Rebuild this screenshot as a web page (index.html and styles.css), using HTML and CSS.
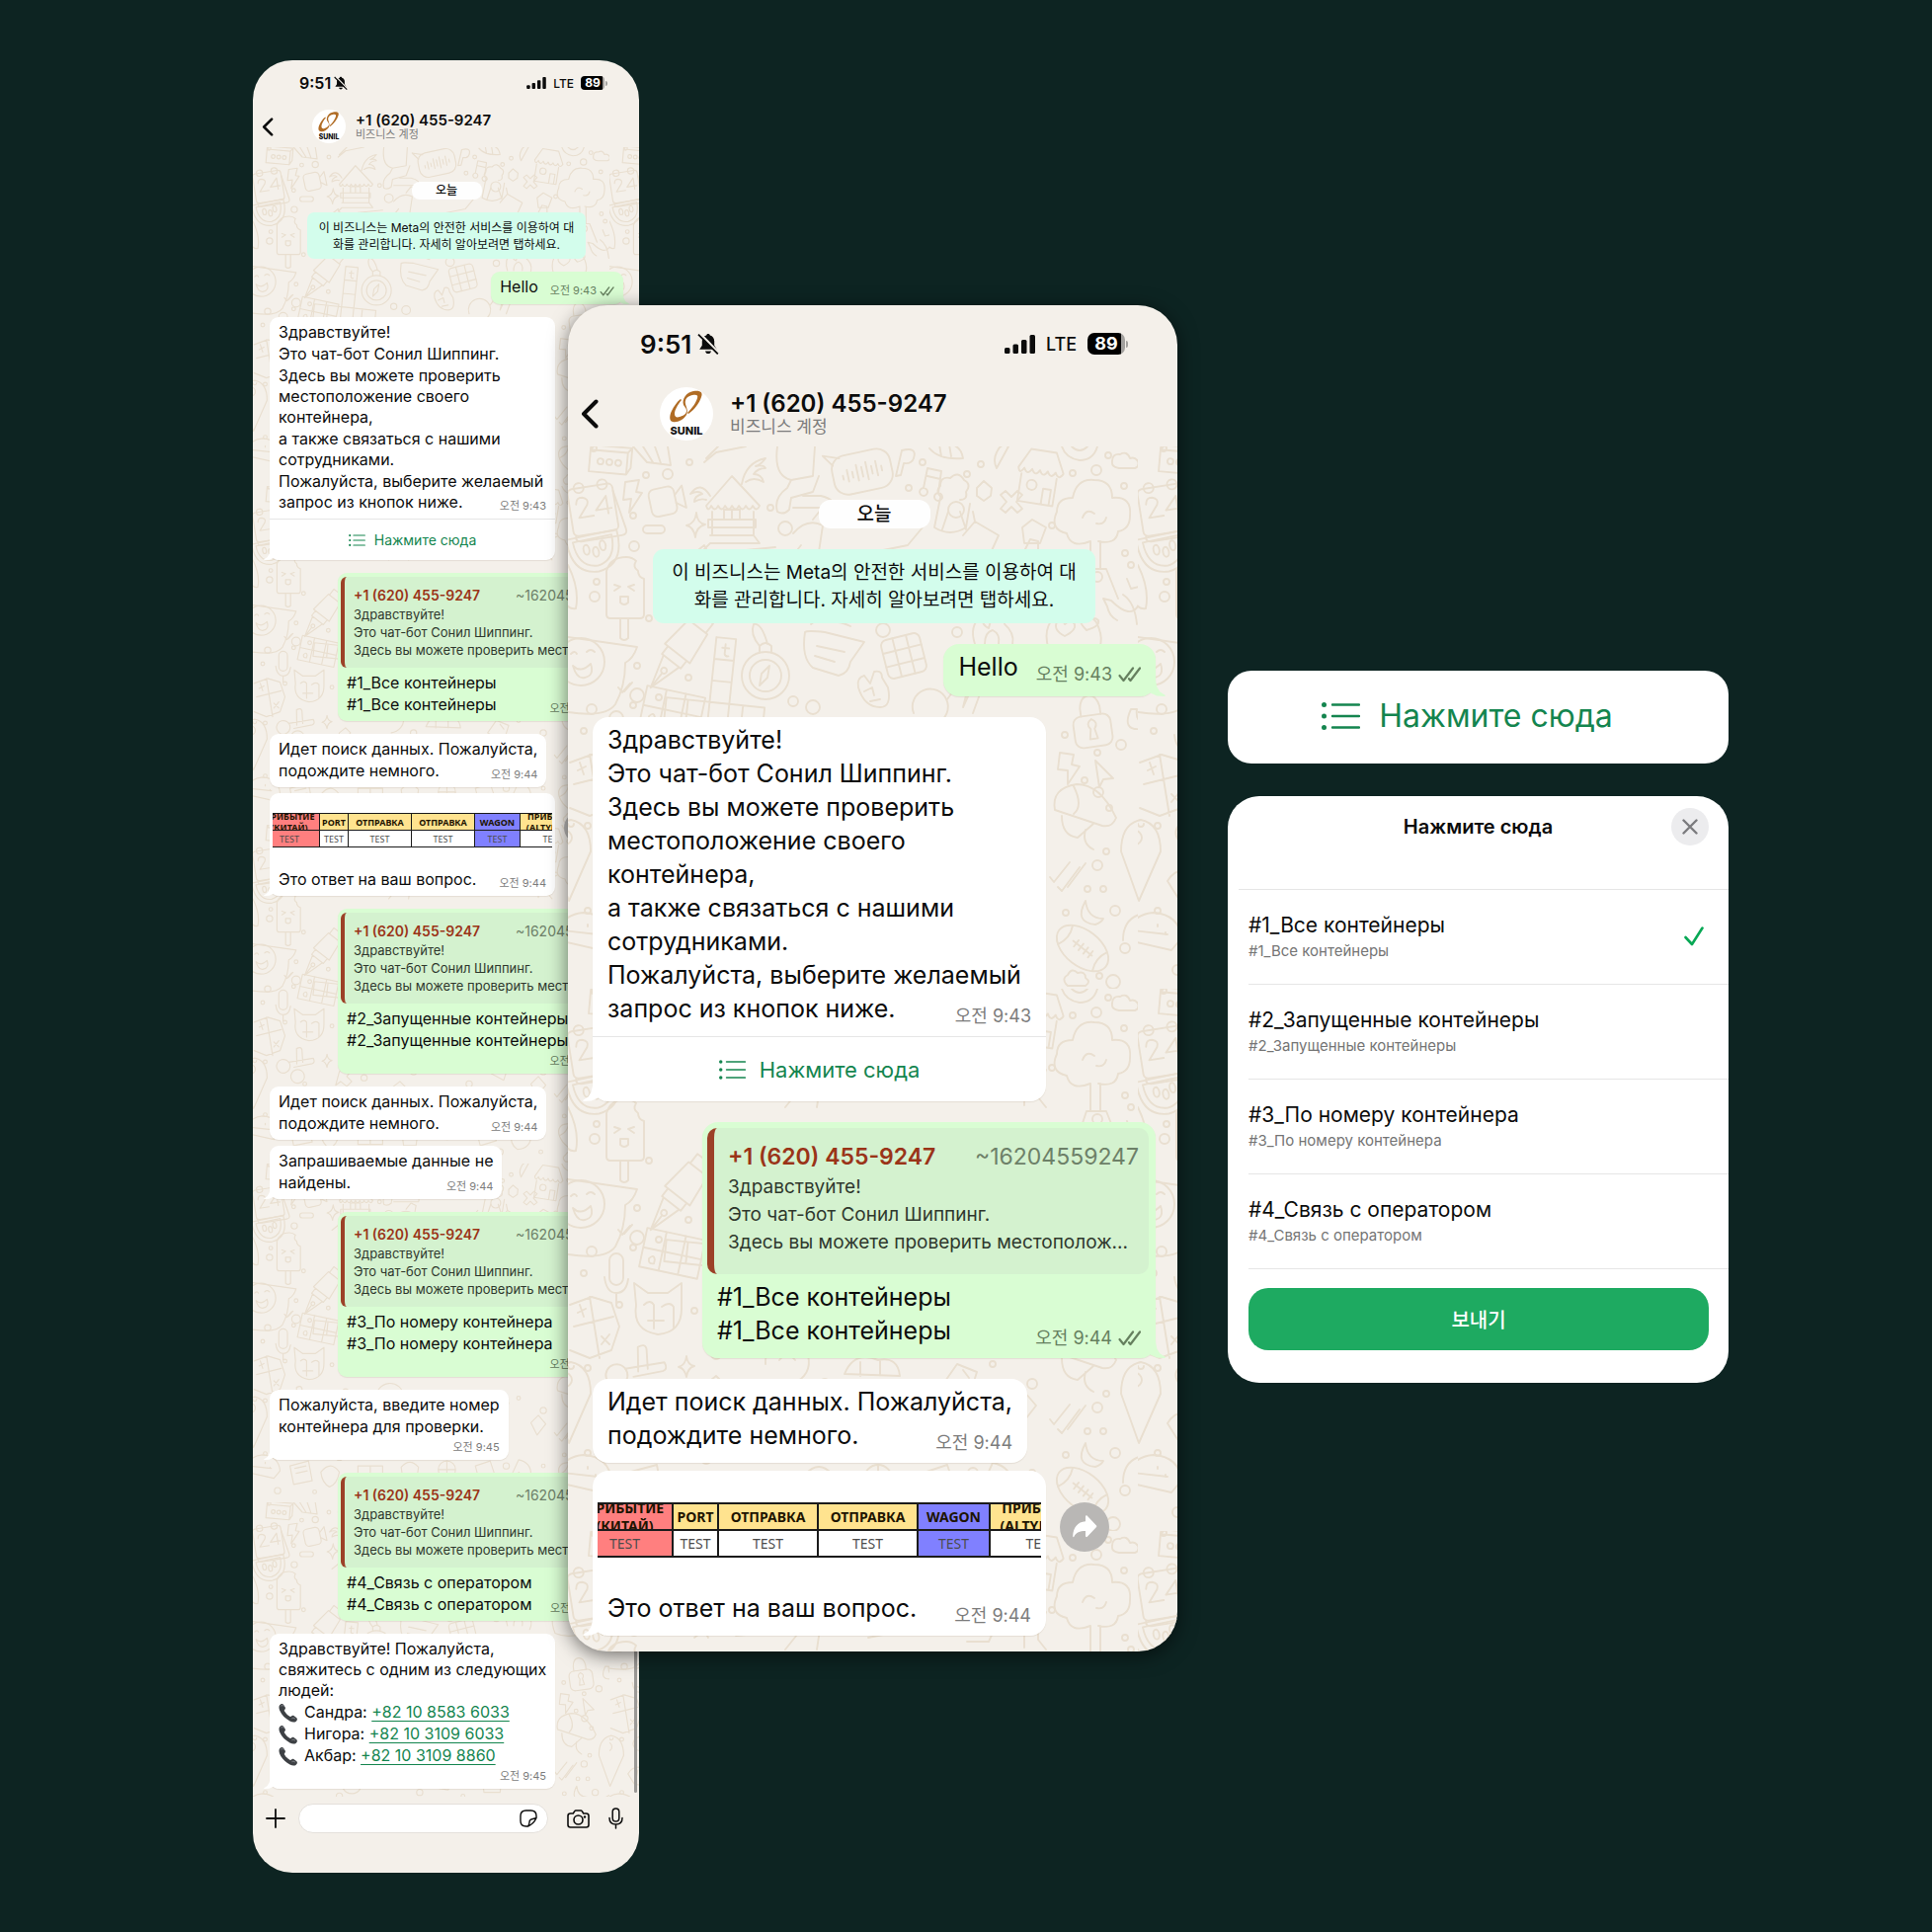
FILE: index.html
```html
<!DOCTYPE html>
<html lang="ru">
<head>
<meta charset="utf-8">
<meta name="viewport" content="width=device-width, initial-scale=1">
<title>Sunil Shipping chat-bot</title>
<link rel="stylesheet" href="styles.css">
</head>
<body>
<svg class="sprite" aria-hidden="true">
  <symbol id="i-bell" viewBox="0 0 22 22">
    <path d="M11 1c1 0 1.800.7 1.800 1.600 2.900.8 4.400 3.100 4.400 6v4.200l2.600 4H2.200l2.600-4V8.600c0-2.900 1.500-5.200 4.400-6C9.200 1.700 10 1 11 1z" fill="currentColor"/>
    <path d="M8 18.500h6c-.4 1.700-1.500 2.600-3 2.600s-2.600-.9-3-2.600z" fill="currentColor"/>
    <path d="M2.800.6 22 20.400" stroke="#f4f0ea" stroke-width="2.200" fill="none"/>
    <path d="M1 1.600 20.800 21.400" stroke="currentColor" stroke-width="1.800" fill="none"/>
  </symbol>
  <symbol id="i-signal" viewBox="0 0 31 19">
    <g fill="currentColor"><rect x="0" y="13" width="5.500" height="6" rx="1.500"/><rect x="8.500" y="9.500" width="5.500" height="9.500" rx="1.500"/><rect x="17" y="5" width="5.500" height="14" rx="1.500"/><rect x="25.500" y="0" width="5.500" height="19" rx="1.500"/></g>
  </symbol>
  <symbol id="i-back" viewBox="0 0 18 30">
    <path d="M15.500 2.500 3 15l12.500 12.500" fill="none" stroke="currentColor" stroke-width="4" stroke-linecap="round" stroke-linejoin="round"/>
  </symbol>
  <symbol id="i-logo" viewBox="0 0 54 54">
    <circle cx="27" cy="27" r="27" fill="#fff"/>
    <g fill="#b06c25">
      <path d="M24 18C22 12 27 5 34 4c7-1 10 1 8 6-2 6-7 13-13 17l-1-1c5-5 9-11 10-15 1-3-1-4-5-3-5 1-8 4-7 9 1 4 3 7 1 11-3 5-9 8-14 7-4-1-3-7-1-11 2-4 5-9 9-12l1 1c-4 5-7 10-7 14 0 3 2 4 5 3 4-1 7-3 7-6 0-3-2-4-3-6z"/>
    </g>
    <text x="27" y="48" text-anchor="middle" class="logo-text">SUNIL</text>
  </symbol>
  <symbol id="i-ticks" viewBox="0 0 23 16">
    <path d="M1.500 9 5.500 14 15 1.500M11 12.200 12.500 14 22 1.500" fill="none" stroke="currentColor" stroke-width="2.200" stroke-linecap="round" stroke-linejoin="round"/>
  </symbol>
  <symbol id="i-list" viewBox="0 0 39 28">
    <g fill="currentColor"><circle cx="2.500" cy="2.500" r="2.500"/><circle cx="2.500" cy="14" r="2.500"/><circle cx="2.500" cy="25.500" r="2.500"/></g>
    <path d="M11 2.500h27M11 14h27M11 25.500h27" stroke="currentColor" stroke-width="2.400" stroke-linecap="round"/>
  </symbol>
  <symbol id="i-forward" viewBox="0 0 50 50">
    <circle cx="25" cy="25" r="25" fill="#b9b7b5"/>
    <path d="M26 14.500c0-1 1-1.500 1.800-.8l9 9.500c.7.700.7 1.400 0 2.100l-9 9.500c-.8.700-1.800.2-1.800-.8v-5c-6 0-9.500 1.500-11.500 5.500-.5 1-1.300.8-1.300-.3C13.500 25.500 18 19.800 26 19.300z" fill="#fff"/>
  </symbol>
  <symbol id="i-handset" viewBox="0 0 20 20">
    <path d="M1 2.500C2 .8 4 .4 5 1.700l1.600 2.500c.6 1 .4 2-.4 2.700-.5.500-.5.900-.1 1.600 1.300 2.300 3 4 5.300 5.200.7.400 1.100.3 1.600-.2.800-.8 1.800-1 2.700-.3l2.400 1.700c1.300 1 1 2.900-.6 4-1.500 1-3.600.8-6-.4C6.900 16 3.200 12.400 1.200 7.800.4 5.700.2 3.900 1 2.500z" fill="#3d4044"/>
    <path d="M2.600 3c1-.9 1.800-.6 2.300.2M13.800 15.500c.9-.6 1.900-.3 2.700.3" fill="none" stroke="#85898e" stroke-width="1" stroke-linecap="round"/>
  </symbol>
  <symbol id="i-plus" viewBox="0 0 20 20">
    <path d="M10 1v18M1 10h18" stroke="currentColor" stroke-width="1.800" stroke-linecap="round"/>
  </symbol>
  <symbol id="i-sticker" viewBox="0 0 18 18">
    <path d="M17 8.500V6.500C17 3 15 1 11.500 1h-5C3 1 1 3 1 6.500v5C1 15 3 17 6.500 17H8.500C12 15.500 15.500 12 17 8.500zM17 8.500C14 10 11.500 9 10.500 11 9.500 12.500 10.500 15 8.500 17" fill="none" stroke="currentColor" stroke-width="1.400" stroke-linejoin="round"/>
  </symbol>
  <symbol id="i-camera" viewBox="0 0 23 19">
    <path d="M3.500 4h2.800l1.500-2.300c.3-.5.700-.7 1.200-.7h5c.5 0 .9.200 1.200.7L16.700 4h2.800c1.500 0 2.500 1 2.500 2.500v9c0 1.500-1 2.500-2.500 2.500h-16C2 18 1 17 1 15.500v-9C1 5 2 4 3.500 4z" fill="none" stroke="currentColor" stroke-width="1.600"/>
    <circle cx="11.500" cy="10.500" r="4.500" fill="none" stroke="currentColor" stroke-width="1.600"/>
    <circle cx="18" cy="7.500" r="1.200" fill="currentColor"/>
  </symbol>
  <symbol id="i-mic" viewBox="0 0 15 22">
    <rect x="4.200" y="1" width="6.600" height="13" rx="3.300" fill="none" stroke="currentColor" stroke-width="1.500"/>
    <path d="M1 10.500C1 14.500 3.500 17 7.500 17s6.500-2.500 6.500-6.500M7.500 17v4" fill="none" stroke="currentColor" stroke-width="1.500" stroke-linecap="round"/>
  </symbol>
  <symbol id="i-close" viewBox="0 0 16 16">
    <path d="M1.500 1.500 14.500 14.500M14.500 1.500 1.500 14.500" stroke="currentColor" stroke-width="2.400" stroke-linecap="round"/>
  </symbol>
</svg>

<main class="stage">

  <section class="phone phone-small" aria-label="Full conversation">
    <div class="status">
      <span class="clock">9:51</span>
      <svg class="bell"><use href="#i-bell"/></svg>
      <svg class="signal"><use href="#i-signal"/></svg>
      <span class="network">LTE</span>
      <span class="battery"><b>89</b></span>
    </div>
    <header class="contact-bar">
      <button class="icon-button" type="button" aria-label="Back"><svg class="back"><use href="#i-back"/></svg></button>
      <svg class="avatar"><use href="#i-logo"/></svg>
      <div>
        <h2>+1 (620) 455-9247</h2>
        <p lang="ko">비즈니스 계정</p>
      </div>
    </header>

    <div class="chat">
      <p class="day" lang="ko">오늘</p>
      <p class="notice" lang="ko">이 비즈니스는 Meta의 안전한 서비스를 이용하여 대<br>화를 관리합니다. 자세히 알아보려면 탭하세요.</p>

      <div class="bubble out tail">
        <p class="last">Hello <time>오전 9:43<svg class="ticks"><use href="#i-ticks"/></svg></time></p>
      </div>

      <div class="bubble in tail wide">
        <p>Здравствуйте!</p>
        <p>Это чат-бот Сонил Шиппинг.</p>
        <p>Здесь вы можете проверить<br>местоположение своего<br>контейнера,</p>
        <p>а также связаться с нашими<br>сотрудниками.</p>
        <p>Пожалуйста, выберите желаемый</p>
        <p class="last joined">запрос из кнопок ниже. <time>오전 9:43</time></p>
        <button class="menu-button" type="button"><svg class="list"><use href="#i-list"/></svg>Нажмите сюда</button>
      </div>

      <div class="bubble out tail wide">
        <blockquote>
          <div class="from"><b>+1 (620) 455-9247</b><span>~16204559247</span></div>
          <p>Здравствуйте!<br>Это чат-бот Сонил Шиппинг.<br>Здесь вы можете проверить местополож...</p>
        </blockquote>
        <p>#1_Все контейнеры</p>
        <p class="last">#1_Все контейнеры <time>오전 9:44<svg class="ticks"><use href="#i-ticks"/></svg></time></p>
      </div>

      <div class="bubble in">
        <p>Идет поиск данных. Пожалуйста,</p>
        <p class="last">подождите немного. <time>오전 9:44</time></p>
      </div>

      <div class="media-row">
        <div class="bubble in tail wide">
          <div class="crop">
            <table>
              <tr><th class="red"><div>ПРИБЫТИЕ<br>(КИТАЙ)</div></th><th><div>PORT</div></th><th><div>ОТПРАВКА</div></th><th><div>ОТПРАВКА</div></th><th class="blue"><div>WAGON</div></th><th><div>ПРИБЫТИЕ<br>(ALTYNKOL)</div></th></tr>
              <tr><td class="red">TEST</td><td>TEST</td><td>TEST</td><td>TEST</td><td class="blue">TEST</td><td>TEST</td></tr>
            </table>
          </div>
          <p class="last">Это ответ на ваш вопрос. <time>오전 9:44</time></p>
        </div>
        <button class="icon-button" type="button" aria-label="Forward"><svg class="forward"><use href="#i-forward"/></svg></button>
      </div>

      <div class="bubble out tail wide">
        <blockquote>
          <div class="from"><b>+1 (620) 455-9247</b><span>~16204559247</span></div>
          <p>Здравствуйте!<br>Это чат-бот Сонил Шиппинг.<br>Здесь вы можете проверить местополож...</p>
        </blockquote>
        <p>#2_Запущенные контейнеры</p>
        <p>#2_Запущенные контейнеры</p>
        <p class="stamp"><time>오전 9:44<svg class="ticks"><use href="#i-ticks"/></svg></time></p>
      </div>

      <div class="bubble in">
        <p>Идет поиск данных. Пожалуйста,</p>
        <p class="last">подождите немного. <time>오전 9:44</time></p>
      </div>
      <div class="bubble in tail follow">
        <p>Запрашиваемые данные не</p>
        <p class="last">найдены. <time>오전 9:44</time></p>
      </div>

      <div class="bubble out tail wide">
        <blockquote>
          <div class="from"><b>+1 (620) 455-9247</b><span>~16204559247</span></div>
          <p>Здравствуйте!<br>Это чат-бот Сонил Шиппинг.<br>Здесь вы можете проверить местополож...</p>
        </blockquote>
        <p>#3_По номеру контейнера</p>
        <p>#3_По номеру контейнера</p>
        <p class="stamp"><time>오전 9:44<svg class="ticks"><use href="#i-ticks"/></svg></time></p>
      </div>

      <div class="bubble in tail">
        <p>Пожалуйста, введите номер</p>
        <p>контейнера для проверки.</p>
        <p class="stamp"><time>오전 9:45</time></p>
      </div>

      <div class="bubble out tail wide">
        <blockquote>
          <div class="from"><b>+1 (620) 455-9247</b><span>~16204559247</span></div>
          <p>Здравствуйте!<br>Это чат-бот Сонил Шиппинг.<br>Здесь вы можете проверить местополож...</p>
        </blockquote>
        <p>#4_Связь с оператором</p>
        <p class="last">#4_Связь с оператором <time>오전 9:45<svg class="ticks"><use href="#i-ticks"/></svg></time></p>
      </div>

      <div class="bubble in tail wide">
        <p>Здравствуйте! Пожалуйста,<br>свяжитесь с одним из следующих<br>людей:</p>
        <p class="person"><svg><use href="#i-handset"/></svg><span>Сандра: <a href="tel:+821085836033">+82 10 8583 6033</a></span></p>
        <p class="person"><svg><use href="#i-handset"/></svg><span>Нигора: <a href="tel:+821031096033">+82 10 3109 6033</a></span></p>
        <p class="person"><svg><use href="#i-handset"/></svg><span>Акбар: <a href="tel:+821031098860">+82 10 3109 8860</a></span></p>
        <p class="stamp"><time>오전 9:45</time></p>
      </div>
      <span class="scroll-thumb"></span>
    </div>

    <form class="composer">
      <button class="icon-button" type="button" aria-label="Attach"><svg class="plus"><use href="#i-plus"/></svg></button>
      <div class="field">
        <input type="text" aria-label="Message">
        <button class="icon-button" type="button" aria-label="Stickers"><svg class="sticker"><use href="#i-sticker"/></svg></button>
      </div>
      <button class="icon-button" type="button" aria-label="Camera"><svg class="camera"><use href="#i-camera"/></svg></button>
      <button class="icon-button" type="button" aria-label="Voice message"><svg class="mic"><use href="#i-mic"/></svg></button>
    </form>
  </section>

  <section class="phone phone-large" aria-label="Conversation close-up">
    <div class="status">
      <span class="clock">9:51</span>
      <svg class="bell"><use href="#i-bell"/></svg>
      <svg class="signal"><use href="#i-signal"/></svg>
      <span class="network">LTE</span>
      <span class="battery"><b>89</b></span>
    </div>
    <header class="contact-bar">
      <button class="icon-button" type="button" aria-label="Back"><svg class="back"><use href="#i-back"/></svg></button>
      <svg class="avatar"><use href="#i-logo"/></svg>
      <div>
        <h2>+1 (620) 455-9247</h2>
        <p lang="ko">비즈니스 계정</p>
      </div>
    </header>

    <div class="chat">
      <p class="day" lang="ko">오늘</p>
      <p class="notice" lang="ko">이 비즈니스는 Meta의 안전한 서비스를 이용하여 대<br>화를 관리합니다. 자세히 알아보려면 탭하세요.</p>

      <div class="bubble out tail">
        <p class="last">Hello <time>오전 9:43<svg class="ticks"><use href="#i-ticks"/></svg></time></p>
      </div>

      <div class="bubble in tail wide">
        <p>Здравствуйте!</p>
        <p>Это чат-бот Сонил Шиппинг.</p>
        <p>Здесь вы можете проверить<br>местоположение своего<br>контейнера,</p>
        <p>а также связаться с нашими<br>сотрудниками.</p>
        <p>Пожалуйста, выберите желаемый</p>
        <p class="last joined">запрос из кнопок ниже. <time>오전 9:43</time></p>
        <button class="menu-button" type="button"><svg class="list"><use href="#i-list"/></svg>Нажмите сюда</button>
      </div>

      <div class="bubble out tail wide">
        <blockquote>
          <div class="from"><b>+1 (620) 455-9247</b><span>~16204559247</span></div>
          <p>Здравствуйте!<br>Это чат-бот Сонил Шиппинг.<br>Здесь вы можете проверить местополож...</p>
        </blockquote>
        <p>#1_Все контейнеры</p>
        <p class="last">#1_Все контейнеры <time>오전 9:44<svg class="ticks"><use href="#i-ticks"/></svg></time></p>
      </div>

      <div class="bubble in">
        <p>Идет поиск данных. Пожалуйста,</p>
        <p class="last">подождите немного. <time>오전 9:44</time></p>
      </div>

      <div class="media-row">
        <div class="bubble in tail wide">
          <div class="crop">
            <table>
              <tr><th class="red"><div>ПРИБЫТИЕ<br>(КИТАЙ)</div></th><th><div>PORT</div></th><th><div>ОТПРАВКА</div></th><th><div>ОТПРАВКА</div></th><th class="blue"><div>WAGON</div></th><th><div>ПРИБЫТИЕ<br>(ALTYNKOL)</div></th></tr>
              <tr><td class="red">TEST</td><td>TEST</td><td>TEST</td><td>TEST</td><td class="blue">TEST</td><td>TEST</td></tr>
            </table>
          </div>
          <p class="last">Это ответ на ваш вопрос. <time>오전 9:44</time></p>
        </div>
        <button class="icon-button" type="button" aria-label="Forward"><svg class="forward"><use href="#i-forward"/></svg></button>
      </div>
    </div>
  </section>

  <aside class="details">
    <button class="callout" type="button"><svg class="list"><use href="#i-list"/></svg>Нажмите сюда</button>

    <form class="sheet">
      <header class="sheet-head">
        <h2 id="sheet-title">Нажмите сюда</h2>
        <button class="close" type="button" aria-label="Close"><svg><use href="#i-close"/></svg></button>
      </header>
      <div role="radiogroup" aria-labelledby="sheet-title">
        <label class="option"><span>#1_Все контейнеры<small>#1_Все контейнеры</small></span><input type="radio" name="menu" checked></label>
        <label class="option"><span>#2_Запущенные контейнеры<small>#2_Запущенные контейнеры</small></span><input type="radio" name="menu"></label>
        <label class="option"><span>#3_По номеру контейнера<small>#3_По номеру контейнера</small></span><input type="radio" name="menu"></label>
        <label class="option"><span>#4_Связь с оператором<small>#4_Связь с оператором</small></span><input type="radio" name="menu"></label>
      </div>
      <button class="send" type="button" lang="ko">보내기</button>
    </form>
  </aside>
</main>
</body>
</html>
```
FILE: styles.css
```css
:root {
  --paper: #f4f0ea;
  --ink: #0c0c0c;
  --muted: #7c7c7c;
  --green: #14854f;
  --mint: #d9fdd3;
  --wallpaper: url("data:image/svg+xml,<svg xmlns='http://www.w3.org/2000/svg' viewBox='0 0 577 549' preserveAspectRatio='none'><g fill='none' stroke='%23e9dfd0' stroke-width='1.900' stroke-linecap='round' stroke-linejoin='round'><g transform='translate(43 15) rotate(5)'><path d='M-21-10h38v22h-38zM-21-10l4-5h38v20l-4 7M21-15l-4 5'/><circle cx='-10' cy='1' r='3'/><circle cx='-1' cy='1' r='3'/><circle cx='8' cy='1' r='3'/></g><path d='M66 0l14 16 24 3-3-19M76 0l10 16M88 0l6 17M138 16l12-10 30-6M140 12l12-12'/><g transform='translate(26 62) rotate(-9)'><rect x='-24' y='-22' width='46' height='48' rx='5'/><path d='M-22 26q-2 6 6 6h40q6 0 5-6l-7-40'/><circle cx='-12' cy='-22' r='5'/><circle cx='12' cy='-22' r='5'/><path d='M-17-6q1-7 7-6 7 2 4 8l-10 12h15M14 8v-18L2 3h16'/></g><path d='M58 36l14-2-3 12 6 1-13 20 2-14-8 1z'/><g transform='translate(100 55) rotate(-12)'><rect x='-17' y='-14' width='26' height='28' rx='6'/><path d='M9-4l9-8v23l-9-7'/></g><g transform='translate(166 52)'><path d='M-26 8L0-22 28 8q-3 7-7 0-3 7-7 0-3 7-7 0-3 7-7 0-3 7-7 0-3 7-7 0-3 7-7 0-3 7-5 0zM-20 14v24M22 14v24M-24 22h48v8h-48zM-22 38h44l6 8h-50l-6 6M-8 12h16v10h-16zM0 12v10M10-14q4-22 24-26-4 6-10 8 8-2 10 2-8 0-12 6 8 0 10 8-10-6-18 0M-22-2q-10-16-20-2 8-4 12 0-8 2-8 8 6-4 12-2'/></g><path d='M212 0q-4 30 14 34l22-4 2-30M226 34l-4 8q-14 10-10 24 6 4 12-2l2-12 22-6 6-16M228 62h40q4-8-12-12h-18'/><g transform='translate(296 26) rotate(-12)'><rect x='-28' y='-20' width='60' height='40' rx='14'/><path d='M-26-12l-8-12 16 6M-18 0v4M-13-5v12M-8-2v6M-3-8v16M2-5v10M7-9v18M12-4v8M17-8v15M22-2v5'/></g><path d='M332 30l6-26q16-4 12 8-2 6-10 5l-3 12z'/><path d='M360 42a4 4 0 1 0 .1 0M360 42l4-20 14 3-3 22a4 4 0 1 1-.1 0M364 30l13 3'/><path d='M366 2q10 12 34 10-2-12-12-14M376-2l2 12M386-2l2 12M434 22l12-22q-8-4-12 6-4 8 0 16z'/><g transform='translate(477 30) rotate(9)'><path d='M-22-6L-12-26h26l10 20q-4 8-8 0-4 8-8 0-4 8-8 0-4 8-8 0-4 8-8 0-4 8-6 0zM-18 0v28h36v-28M6 28v-16h8v16'/><circle cx='-6' cy='10' r='5'/></g><path d='M500 0q4 12 18 14 14 0 18-14M510 0q8 8 16 0M558 22h16q5-2 3-7-3-5-8-3-3-8-10-4-8-1-8 7-1 6 7 7z'/><g transform='translate(391 62)'><path d='M-12-10q-8-6-2-12 0-10 10-8 8-8 14 2 8 4 2 12 2 8-6 8M-14-10l-6 30q16 10 32 0l4-24M-6 4l-6 18M6 4l6 18'/><circle cx='2' cy='2' r='8'/></g><path d='M414 42l7-7 8 7-1 8-7 5-7-5zM443 45l6 6 6-6 5 4-6 7 6 7-5 4-6-6-6 6-5-4 6-7-6-7z'/><g transform='translate(531 66)'><path d='M-2 30q-20 8-24-8-18-4-10-22 0-14 16-14 4-20 22-18 18 0 18 18 20-2 18 18 0 14-12 16-2 14-20 10M-10 6q4-10 12-4M4 12q8 2 10-6M-2 30v28M8 30v28M-16 88l10-30h20l12 30'/></g><g transform='translate(27 105) rotate(-12)'><path d='M-26-16h52q2 36-26 38-28-2-26-38zM-20-12h40q0 26-20 28-20-2-20-28z'/><ellipse cx='-8' cy='-2' rx='3' ry='5'/><ellipse cx='1' cy='2' rx='3' ry='5'/><ellipse cx='9' cy='-3' rx='3' ry='5'/></g><path d='M130 67q1 11 9 12-9 2-10 13-2-11-9-12 9-2 10-13z'/><rect x='76' y='80' width='22' height='8' rx='4'/><path d='M228 88q14-16 30-8l-6 40M236 100l-16 20M248 74l8-10 8 4-2 12M304 108l40-8 20-24M400 90l12-14 24 14-10 22-22 0M412 76l-2-10M460 82l10-8 14 8-6 16-16 0zM462 118v-12l6-12 8 2v14l8 10'/><path d='M128 108l10-8 4 8M170 106l40-4'/><g transform='translate(57 150)'><path d='M-18-24q4-14 20-14 6 0 10 4-4 6 2 10 0 6 6 8v36q0 4-4 4h-30q-4 0-4-4zM-4 24v20q4 4 8 0v-20M-10-10l6 2-6 4M10-10l-6 2 6 4M-4 2h8v6q-4 4-8 0z'/></g><path d='M0 120q12 24 8 44-10 2-14-14M556 176q-8-4-10-14l-4-8 8 2q20 20 28 4M562 150q12 8 14 30M566 134l4 10 8-2'/><g transform='translate(513 190)'><path d='M-24 22q-12-30 8-42 24-10 38 8 12 24-6 36-22 6-40-2z'/><path d='M-10 2q-12-6-8-14 6-4 8 2 6-6 10 0 2 6-10 12zM12-4q-10-10-4-14 6-2 6 4 6-4 10 0 2 6-12 10z'/></g><g transform='translate(112 208) rotate(38)'><path d='M-10-44h20v12h-20zM-12-32h24l4 34h-32zM-12 2h24v10h-24zM-10 12l10 34 10-34M0 46v-18'/><circle cx='0' cy='24' r='3'/></g><g transform='translate(17 218)'><path d='M-17-25l70 10q-4 12-12 16 0 24-10 42-10 14-48 8M34 26l4 5 8-9M40 30l8-9'/><circle cx='-4' cy='0' r='24'/><path d='M-14-8q4-4 6 0M2-10q4-4 8 0M-12 4q8 8 18-2 4 12-6 14-8 2-12-12z'/></g><g transform='translate(158 216) rotate(6)'><path d='M-10-22h20v88h-20zM-10 0h20M-10 22h20M-10 44h20M-54 44h100v22h-100zM-32 44v22M24 44v22M0-16v10q1 3 4 2M-3-12h7'/></g><g transform='translate(200 232)'><circle r='24'/><circle r='16'/><path d='M-4-2l8-8-2 12-8 8zM-6-24v-6q6-6 12 0v6M-6-30q-10-12-6-22 8-2 14 20'/></g><path d='M240 188q-4 26 8 36l26 8q10-2 12-14l14-20-40-10q-18-2-20 0zM252 202l28 6M250 212l20 6M246 180q10-8 14-2 14-2 26 4'/><g transform='translate(340 212) rotate(-14)'><rect x='-20' y='-20' width='40' height='40' rx='6'/><path d='M-7-20v40M7-20v40M-20-7h40M-20 7h40'/></g><path d='M412 200q-6-18 6-28 2 10 8 12 2-14 14-18-2 12 6 18 8 10 2 22M422 200q0-12 8-14 8 4 6 14'/><path d='M294 244q-2-10 6-12l6 8 4-12q8-2 8 6l6 10q4 20-8 20-16 0-22-20zM300 248l8-4 2 8M306 258l10-2M384 256l16-22 6 6-6 24 10-22 8 6-8 22'/><path d='M380 276l20 6M350 270a18 18 0 1 1 24 10'/><g transform='translate(531 284) rotate(-8)'><rect x='-19' y='-12' width='38' height='32' rx='8'/><path d='M-10-12v-8q2-12 10-12t10 12v8M-4 12l2-10q-5-6 2-10 7 4 2 10l2 10z'/></g><path d='M570 266q-10 22 10 20 4-2 6-6-12 0-10-14zM498 310l14 2-2 10 8 2-12 18 0-14-10-1zM534 318l18 18-10 1-4 8zM2 320l22-8 20 6 8 24-8 24-22 8-20-8M6 342l40-10M22 312l10 62M10 328l8-4M12 320l4 12M34 352l8 8M42 350l-8 10'/><path d='M493 368q-4-22 22-26 24 0 40 34-4 10-14 8l-48-16zM500 374q0 20 16 22l16-14M512 344q10 20 0 28M524 388q-4 14 8 20'/><path d='M560 410q0-28 20-32 20 4 20 32l-22 50zM-17 410q0-28 20-32 20 4 20 32l-22 50zM-10 396a7 7 0 1 0 14 0 7 7 0 1 0-14 0M-8 384a3 3 0 1 0 6 0M0 382a3 3 0 1 0 6 0'/><path d='M488 436l4 5 16-20M496 446l4 4 18-24M506 446l18-24M524 460q-12 22 10 24 6-2 8-6-16 0-18-18z'/><g transform='translate(521 508) rotate(38)'><ellipse rx='30' ry='18'/><path d='M-22-12q6 12 0 24M22-12q-6 12 0 24M-12 0h24M-8-4v8M-2-4v8M4-4v8M10-4v8'/></g><path d='M-10 500q0-26 26-28 26 2 28 26l-10 12zM-6 490l36 4M20 484v2M28 492v2M562 500q0-26 26-28M504 544q-4-6 2-9 4-8 10-2 8-2 8 5 6 4 0 8h-18z'/><g transform='translate(49 288)'><rect x='-7' y='-20' width='14' height='32' rx='7'/><path d='M-12 4q2 16 12 16t12-14M0 20v10'/></g><g transform='translate(106 266) rotate(12)'><path d='M-30-18h60v40h-60zM-10-18v40M10-18v40M-30 2h60'/><path d='M-22 12q4-6 6 0v4q-6 2-6-4'/></g><g transform='translate(91 330)'><path d='M-22-10l-2-22 14 10h20l14-10v26q0 24-24 26-26-4-22-30zM-14-10q6-6 10 0v24M4-8q8-6 12 0v22M-10 6h16'/></g><g transform='translate(62 392) rotate(-15)'><circle r='11' cx='-12' cy='-4'/><circle r='11' cx='6' cy='18'/><path d='M-2-8l40 4q2 8-4 8l-30-2M10-2l6-24q8-2 8 4l-4 20'/></g><path d='M120 372q1 9 8 10-7 2-8 11-2-9-8-10 7-2 8-11zM140 400l10-8 8 8-6 8 8 8-8 8-10-8-8 6zM200 380a22 22 0 1 1 24 20M214 376q8-10 16 0M280 390q10-24 34-14 20-4 22 16zM296 392v-14M316 392v-16M380 400l14-20 20 8-8 26zM400 386l6 8M30 440q10-16 26-8l20 12q-14 20-36 12zM46 434l-4 20M100 430l30 8-4 24-30-6zM106 444l18 4M160 440a16 16 0 1 0 .1 0M150 448q10 10 22 0M220 430l18-14 16 16-20 24zM228 436l10 10M290 440q20-14 36 4l-10 22-24-4zM370 440h34l-4 30h-26zM366 432h42v8h-42zM450 420l12-12 12 14-14 18zM60 490l30-8 6 32-30 6zM68 494l18-4M70 502l18-4M110 500q16-20 30 0-4 20-16 24-12-6-14-24zM170 490h40v28h-40zM190 490v28M170 504h40M240 492q14-16 28 0l-4 28h-20zM300 496a14 14 0 1 0 28 0 14 14 0 1 0-28 0M300 496h28M314 482v28M360 490l24-8 10 30-26 8zM430 480q20 4 20 24t-22 22q-14-10-8-24zM430 500l10 8'/><g><circle cx='26' cy='2' r='3'/><circle cx='123' cy='16' r='3'/><circle cx='79' cy='29' r='3'/><circle cx='101' cy='28' r='5'/><circle cx='205' cy='62' r='3'/><circle cx='220' cy='83' r='7'/><circle cx='345' cy='42' r='3'/><circle cx='359' cy='16' r='3'/><circle cx='404' cy='28' r='3'/><circle cx='418' cy='18' r='3'/><circle cx='511' cy='27' r='3'/><circle cx='535' cy='24' r='5'/><circle cx='547' cy='9' r='3'/><circle cx='563' cy='40' r='3'/><circle cx='66' cy='70' r='3'/><circle cx='67' cy='101' r='5'/><circle cx='29' cy='137' r='3'/><circle cx='82' cy='174' r='3'/><circle cx='27' cy='152' r='5'/><circle cx='490' cy='80' r='3'/><circle cx='570' cy='120' r='3'/><circle cx='536' cy='132' r='5'/><circle cx='564' cy='108' r='3'/><circle cx='319' cy='186' r='7'/><circle cx='394' cy='188' r='5'/><circle cx='70' cy='222' r='3'/><circle cx='70' cy='252' r='7'/><circle cx='92' cy='254' r='3'/><circle cx='228' cy='258' r='5'/><circle cx='248' cy='264' r='7'/><circle cx='122' cy='234' r='3'/><circle cx='560' cy='302' r='5'/><circle cx='536' cy='310' r='3'/><circle cx='503' cy='292' r='3'/><circle cx='523' cy='338' r='3'/><circle cx='537' cy='350' r='5'/><circle cx='548' cy='366' r='3'/><circle cx='536' cy='424' r='5'/><circle cx='545' cy='410' r='3'/><circle cx='526' cy='448' r='3'/><circle cx='542' cy='448' r='3'/><circle cx='554' cy='470' r='5'/><circle cx='504' cy='472' r='3'/><circle cx='564' cy='508' r='5'/><circle cx='538' cy='536' r='3'/><circle cx='552' cy='542' r='7'/><circle cx='24' cy='266' r='5'/><circle cx='66' cy='262' r='3'/><circle cx='16' cy='288' r='3'/><circle cx='52' cy='320' r='3'/><circle cx='128' cy='326' r='3'/><circle cx='20' cy='384' r='3'/><circle cx='150' cy='370' r='5'/><circle cx='180' cy='410' r='5'/><circle cx='260' cy='400' r='5'/><circle cx='350' cy='420' r='5'/><circle cx='430' cy='380' r='3'/><circle cx='470' cy='400' r='5'/><circle cx='84' cy='420' r='3'/><circle cx='20' cy='470' r='3'/><circle cx='140' cy='476' r='5'/><circle cx='270' cy='470' r='5'/><circle cx='340' cy='476' r='3'/><circle cx='410' cy='490' r='5'/><circle cx='470' cy='490' r='3'/><circle cx='40' cy='530' r='5'/><circle cx='100' cy='532' r='3'/><circle cx='150' cy='534' r='5'/><circle cx='226' cy='530' r='3'/><circle cx='286' cy='530' r='5'/><circle cx='350' cy='532' r='3'/><circle cx='400' cy='530' r='5'/><circle cx='466' cy='530' r='3'/></g></g></svg>");
}

* { box-sizing: border-box; }

body {
  margin: 0;
  background: #0d2422;
  color: var(--ink);
  font-family: Inter, "Noto Sans CJK KR", sans-serif;
}

h2, p, blockquote { margin: 0; }
svg { display: block; flex: none; }
button, input { font: inherit; color: inherit; }
button { cursor: pointer; }

.sprite { position: absolute; width: 0; height: 0; }
.logo-text { font: 800 11px Inter, sans-serif; fill: #111; }

.icon-button {
  display: block;
  flex: none;
  padding: 0;
  border: 0;
  background: none;
}

.stage {
  display: grid;
  grid-template-columns: 256fr 391fr 545fr 51fr 507fr 206fr;
  align-items: start;
  padding: 61px 0 40px;
}

/* Phones: both share one layout, sized by these variables */

.phone {
  background: var(--paper);
  border-radius: 40px;
  overflow: hidden;
}

.phone-small {
  --text: 16px;
  --line: 21px;
  --para: 1px;
  --title: 15px;
  --title-line: 17px;
  --sub: 11px;
  --sub-line: 13px;
  --note: 12px;
  --note-line: 17px;
  --time: 11px;
  --time-line: 13px;
  --quote: 13px;
  --quote-name: 14px;
  --quote-line: 18px;
  --link: 14px;
  --wide: 289px;
  --min: 33px;
  --gap: 13px;
  --tight: 6px;
  --pad-top: 5px;
  --pad-x: 9px;
  --pad-bottom: 6px;
  --radius: 9px;
  --tail: 7px;
  grid-column: 2;
}

.phone-large {
  --text: 25px;
  --line: 34px;
  --para: 0px;
  --title: 24px;
  --title-line: 27px;
  --sub: 17px;
  --sub-line: 20px;
  --note: 19px;
  --note-line: 28px;
  --time: 18px;
  --time-line: 18px;
  --quote: 19px;
  --quote-name: 23px;
  --quote-line: 28px;
  --link: 22px;
  --wide: 459px;
  --min: 53px;
  --gap: 21px;
  --tight: 8px;
  --pad-top: 6px;
  --pad-x: 15px;
  --pad-bottom: 11px;
  --radius: 16px;
  --tail: 11px;
  grid-column: 3;
  position: relative;
  margin: 248px 0 0 -72px;
  box-shadow: 0 4px 20px rgba(0, 0, 0, .55);
}

.phone-small, .phone-large { grid-row: 1; }

.status {
  display: flex;
  align-items: center;
  height: 46px;
  padding: 0 32px 0 47px;
  gap: 7px;
}
.phone-large .status { height: 78px; padding: 0 50px 0 73px; gap: 11px; }

.clock { font-size: 16px; font-weight: 600; }
.bell { width: 14px; height: 14px; margin-left: -4px; }
.signal { width: 20px; height: 12px; margin-left: auto; }
.network { font-size: 12px; font-weight: 500; }
.battery {
  display: flex;
  align-items: center;
  gap: 1px;
}
.battery b {
  width: 24px;
  border-radius: 4px;
  background: linear-gradient(to right, #000 90%, #a3a19e 90%);
  color: #fff;
  font-size: 12px;
  line-height: 14px;
  text-align: center;
}
.battery::after {
  content: "";
  width: 2px;
  height: 5px;
  border-radius: 0 2px 2px 0;
  background: #a3a19e;
}
.phone-large .clock { font-size: 26px; }
.phone-large .bell { width: 22px; height: 22px; margin-left: -5px; }
.phone-large .signal { width: 31px; height: 19px; }
.phone-large .network { font-size: 18px; }
.phone-large .battery b { width: 38px; border-radius: 7px; font-size: 18px; line-height: 22px; }
.phone-large .battery::after { height: 7px; }

.contact-bar {
  display: flex;
  align-items: center;
  height: 42px;
  padding-left: 9px;
}
.back { width: 12px; height: 19px; margin-right: 39px; }
.avatar { width: 34px; height: 34px; margin-right: 10px; }
.contact-bar h2 { font-size: var(--title); line-height: var(--title-line); font-weight: 600; }
.contact-bar p { font-size: var(--sub); line-height: var(--sub-line); color: var(--muted); }
.phone-large .contact-bar { height: 65px; padding: 0 0 2px 13px; }
.phone-large .back { width: 18px; height: 30px; margin-right: 62px; }
.phone-large .avatar { width: 54px; height: 54px; margin-right: 17px; }

/* Chat */

.chat {
  position: relative;
  display: flex;
  flex-direction: column;
  align-items: flex-start;
  gap: var(--gap);
  padding: 35px 16px 8px 17px;
  background: var(--wallpaper) 0 0 / 361px 343px;
}
.phone-large .chat { padding: 54px 22px 16px 25px; background-size: 577px 549px; }

.day {
  align-self: center;
  width: 71px;
  border-radius: 8px;
  background: #fefefe;
  font-size: var(--note);
  line-height: 18px;
  font-weight: 500;
  text-align: center;
}
.phone-large .day { width: 113px; border-radius: 12px; line-height: 29px; }

.notice {
  align-self: center;
  padding: 7px 12px 6px;
  border-radius: 7px;
  background: #d3fdec;
  font-size: var(--note);
  line-height: var(--note-line);
  text-align: center;
  white-space: nowrap;
}
.phone-large .notice { padding: 10px 19px 9px; border-radius: 11px; }

.bubble {
  --fill: #fff;
  position: relative;
  min-height: var(--min);
  padding: var(--pad-top) var(--pad-x) var(--pad-bottom);
  border-radius: var(--radius);
  background: var(--fill);
  box-shadow: 0 1px 1px rgba(120, 100, 70, .13);
  font-size: var(--text);
  line-height: var(--line);
  white-space: nowrap;
}
.bubble.out { --fill: var(--mint); align-self: flex-end; }
.bubble.wide { width: var(--wide); }
.bubble > p + p { margin-top: var(--para); }
.bubble > p.joined { margin-top: 0; }
.follow { margin-top: calc(var(--tight) - var(--gap)); }

.tail::after {
  content: "";
  position: absolute;
  bottom: 0;
  left: calc(0px - var(--tail) + 1px);
  width: calc(var(--tail) * 2);
  height: calc(var(--tail) * 2);
  background: var(--fill);
  clip-path: polygon(46% 0, 45% 30%, 39% 58%, 25% 80%, 0 96%, 4% 100%, 40% 98%, 70% 84%, 100% 100%, 100% 0);
}
.tail.out::after { left: auto; right: calc(0px - var(--tail) + 1px); transform: scaleX(-1); }

.last {
  display: flex;
  align-items: flex-end;
  justify-content: space-between;
  gap: 12px;
}
.phone-large .last { gap: 18px; }

time {
  display: flex;
  align-items: center;
  gap: 3px;
  color: var(--muted);
  font-size: var(--time);
  line-height: var(--time-line);
}
.out time { color: #66805f; }
.ticks { width: 15px; height: 10px; }
.phone-large time { gap: 6px; }
.phone-large .ticks { width: 23px; height: 16px; }

.stamp {
  display: flex;
  justify-content: flex-end;
  padding-top: 3px;
}

.menu-button {
  display: flex;
  align-items: center;
  justify-content: center;
  gap: 9px;
  width: calc(100% + 2 * var(--pad-x));
  height: 42px;
  margin: 6px calc(0px - var(--pad-x)) calc(0px - var(--pad-bottom));
  padding: 0;
  border: 0;
  border-top: 1px solid #e6e6e6;
  background: none;
  color: var(--green);
  font-size: var(--link);
}
.menu-button .list { width: 17px; height: 12px; }
.phone-large .menu-button { gap: 14px; height: 66px; margin-top: 11px; }
.phone-large .menu-button .list { width: 27px; height: 20px; }

blockquote {
  margin: -1px -5px 5px -6px;
  padding: 8px 4px 9px 9px;
  border-left: 4px solid #9c4128;
  border-radius: 6px;
  background: #d4f2cf;
  font-size: var(--quote);
  line-height: var(--quote-line);
  color: #2f382d;
  overflow: hidden;
}
.phone-large blockquote {
  margin: 0 -8px 6px -10px;
  padding: 12px 10px 18px 14px;
  border-left-width: 7px;
  border-radius: 10px;
}
.from {
  display: flex;
  justify-content: space-between;
  font-size: var(--quote-name);
  line-height: var(--line);
}
.from b { color: #9a3418; font-weight: 600; }
.from span { color: #6d8068; }

.media-row { display: flex; align-items: center; gap: 9px; margin-top: calc(var(--tight) - var(--gap)); }
.media-row .icon-button { margin-bottom: 34px; }
.forward { width: 32px; height: 32px; }
.phone-large .media-row { gap: 14px; }
.phone-large .media-row .icon-button { margin-bottom: 53px; }
.phone-large .forward { width: 50px; height: 50px; }

/* Cropped preview of the spreadsheet */

.crop { margin: 15px -6px 22px; overflow: hidden; }
.crop table {
  table-layout: fixed;
  width: 331px;
  margin-left: -14px;
  border-collapse: collapse;
  font-family: "Noto Sans", sans-serif;
  font-size: 9px;
  line-height: 11px;
}
.crop th, .crop td {
  height: 17px;
  padding: 0;
  border: 1px solid #1b1b1b;
  text-align: center;
}
.crop th { background: #ffe38f; color: #1d1400; }
.crop th div { display: flex; align-items: center; justify-content: center; height: 16px; overflow: hidden; }
.crop td { color: #4c4c4c; }
.crop .red { background: #ff7f7f; }
.crop .blue { background: #8080ff; }
.crop th:nth-child(1) { width: 61px; }
.crop th:nth-child(2) { width: 29px; }
.crop th:nth-child(3), .crop th:nth-child(4) { width: 64px; }
.crop th:nth-child(5) { width: 46px; }

.phone-large .crop { margin: 26px -10px 34px; }
.phone-large .crop table { width: 524px; margin-left: -22px; font-size: 14px; line-height: 18px; }
.phone-large .crop th, .phone-large .crop td { height: 27px; border-width: 2px; }
.phone-large .crop th div { height: 25px; }
.phone-large .crop th:nth-child(1) { width: 97px; }
.phone-large .crop th:nth-child(2) { width: 46px; }
.phone-large .crop th:nth-child(3), .phone-large .crop th:nth-child(4) { width: 101px; }
.phone-large .crop th:nth-child(5) { width: 73px; }

.person { display: flex; align-items: center; gap: 6px; }
.person svg { width: 20px; height: 20px; }
.person a { color: var(--green); text-underline-offset: 3px; text-decoration-thickness: 1px; }

.scroll-thumb {
  position: absolute;
  right: 2px;
  bottom: 4px;
  width: 3px;
  height: 300px;
  border-radius: 2px;
  background: #9b9996;
}

.composer {
  display: flex;
  align-items: center;
  padding: 7px 16px 40px 13px;
}
.plus { width: 20px; height: 20px; margin-right: 13px; }
.field {
  display: flex;
  flex: 1;
  align-items: center;
  height: 30px;
  min-width: 0;
  padding: 0 10px 0 14px;
  border: 1px solid #e4e0db;
  border-radius: 15px;
  background: #fff;
}
.field input { flex: 1; min-width: 0; border: 0; outline: 0; background: none; font-size: 16px; }
.sticker { width: 18px; height: 18px; }
.camera { width: 23px; height: 19px; margin: 0 19px; }
.mic { width: 15px; height: 22px; }

/* Right column */

.details {
  grid-column: 5;
  grid-row: 1;
  display: flex;
  flex-direction: column;
  gap: 33px;
  margin-top: 618px;
}

.callout {
  display: flex;
  align-items: center;
  justify-content: center;
  gap: 19px;
  height: 94px;
  padding: 0 22px 3px 0;
  border: 0;
  border-radius: 24px;
  background: #fff;
  color: var(--green);
  font-size: 32px;
}
.callout .list { width: 39px; height: 28px; }

.sheet { border-radius: 32px; background: #fff; overflow: hidden; }

.sheet-head {
  display: grid;
  grid-template-columns: 38px 1fr 38px;
  align-items: center;
  margin-left: 11px;
  padding: 12px 20px 44px 9px;
  border-bottom: 1px solid #e6e6e6;
}
.sheet-head h2 { grid-column: 2; font-size: 20px; font-weight: 600; text-align: center; }
.close {
  display: flex;
  align-items: center;
  justify-content: center;
  width: 38px;
  height: 38px;
  padding: 0;
  border: 0;
  border-radius: 50%;
  background: #ececee;
  color: #7b7b7e;
}
.close svg { width: 16px; height: 16px; }

.option {
  display: flex;
  align-items: center;
  justify-content: space-between;
  margin-left: 21px;
  padding: 22px 25px 23px 0;
  border-bottom: 1px solid #e6e6e6;
  font-size: 21px;
  line-height: 28px;
}
.option small {
  display: block;
  margin-top: 2px;
  color: #757575;
  font-size: 15px;
  line-height: 20px;
}
.option input {
  width: 20px;
  height: 20px;
  margin: 0;
  appearance: none;
}
.option input:checked {
  background: url("data:image/svg+xml,<svg xmlns='http://www.w3.org/2000/svg' viewBox='0 0 20 20'><path d='M1.500 11 8 18 18.500 1.500' fill='none' stroke='%2308a855' stroke-width='2.600' stroke-linecap='round' stroke-linejoin='round'/></svg>") center / contain no-repeat;
}

.send {
  display: block;
  width: calc(100% - 41px);
  height: 63px;
  margin: 19px 20px 33px 21px;
  border: 0;
  border-radius: 20px;
  background: #1eaa61;
  color: #fff;
  font-size: 20px;
  font-weight: 500;
}
```
